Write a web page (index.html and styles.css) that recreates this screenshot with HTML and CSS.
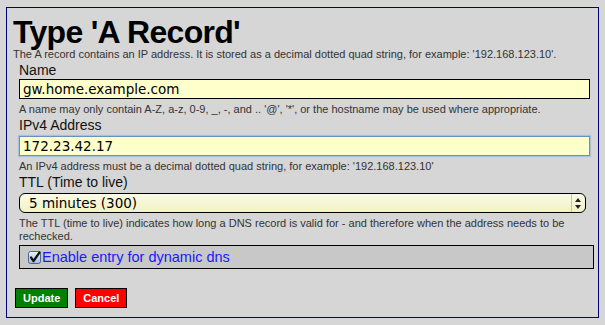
FILE: index.html
```html
<!DOCTYPE html>
<html lang="en">
<head>
    <meta charset="UTF-8">
    <title>Type 'A Record'</title>
    <link rel="stylesheet" href="styles.css">
</head>
<body>
    <div class="panel">
        <h1>Type 'A Record'</h1>
        <p class="intro">The A record contains an IP address. It is stored as a decimal dotted quad string, for example: '192.168.123.10'.</p>

        <form class="record-form">
            <label for="name">Name</label>
            <input type="text" id="name" class="field" value="gw.home.example.com">
            <p class="hint">A name may only contain A-Z, a-z, 0-9, _, -, and .. '@', '*', or the hostname may be used where appropriate.</p>

            <label for="address">IPv4 Address</label>
            <input type="text" id="address" class="field focused" value="172.23.42.17">
            <p class="hint">An IPv4 address must be a decimal dotted quad string, for example: '192.168.123.10'</p>

            <label for="ttl">TTL (Time to live)</label>
            <div class="select-wrap">
                <select id="ttl" class="field select">
                    <option value="300">5 minutes (300)</option>
                    <option value="3600">1 hour (3600)</option>
                    <option value="86400">1 day (86400)</option>
                </select>
                <span class="select-arrows">
                    <svg width="6" height="11" viewBox="0 0 6 11"><path d="M3 0 L6 4 L0 4 Z M0 7 L6 7 L3 11 Z" fill="#222"/></svg>
                </span>
            </div>
            <p class="hint">The TTL (time to live) indicates how long a DNS record is valid for - and therefore when the address needs to be rechecked.</p>

            <div class="dyn-box">
                <span class="check">
                    <svg width="13" height="13" viewBox="0 0 13 13">
                        <defs>
                            <linearGradient id="chk" x1="0" y1="0" x2="0" y2="1">
                                <stop offset="0" stop-color="#eef4fc"/>
                                <stop offset="1" stop-color="#9dbbe6"/>
                            </linearGradient>
                        </defs>
                        <rect x="0.5" y="0.5" width="12" height="12" rx="2" fill="url(#chk)" stroke="#4f6390"/>
                        <path d="M3 6.5 L5.5 10 L11.5 1.5" fill="none" stroke="#111" stroke-width="2.2" stroke-linecap="round" stroke-linejoin="round"/>
                    </svg>
                </span>
                <label for="dynamic" class="dyn-label">Enable entry for dynamic dns</label>
            </div>
        </form>

        <div class="actions">
            <button type="button" class="btn btn-update">Update</button>
            <button type="button" class="btn btn-cancel">Cancel</button>
        </div>
    </div>
</body>
</html>
```

FILE: styles.css
```css
body {
    margin: 0;
    padding-top: 7px;
    background-color: #d6d6d6;
    font-family: "Liberation Sans", Arial, sans-serif;
    color: #111;
}

.panel {
    margin: 0 6px;
    height: 309px;
    border: 1px solid #000080;
    padding: 0 6px;
}

h1 {
    margin: 9px 0 0;
    font-size: 32px;
    line-height: 31px;
    letter-spacing: -0.7px;
    font-weight: bold;
    color: #000;
}

.intro {
    margin: 0;
    font-size: 11px;
    line-height: 13px;
    color: #333;
}

.record-form {
    padding-left: 6px;
}

label {
    display: block;
    margin-top: 1px;
    font-size: 14px;
    line-height: 16px;
}

.field {
    display: block;
    box-sizing: border-box;
    width: 571px;
    height: 20px;
    margin: 1px 0 0;
    padding: 0 3px;
    border: 1px solid #000;
    background-color: #ffffcc;
    font-family: "DejaVu Sans", Verdana, sans-serif;
    font-size: 13.5px;
    color: #000;
}

.field.focused {
    margin-top: 3px;
    border-color: #6d8fc0;
    box-shadow: 0 0 1px 1px #a9c0de;
}

.select-wrap {
    position: relative;
    width: 567px;
    margin-top: 3px;
}

.select {
    width: 567px;
    margin: 0;
    padding: 0 9px;
    border-radius: 6px;
    appearance: none;
    -webkit-appearance: none;
    background: linear-gradient(#fbfbe4, #f2f2c6);
}

.select-arrows {
    position: absolute;
    right: 1px;
    top: 1px;
    width: 14px;
    height: 18px;
    box-sizing: border-box;
    padding-left: 3px;
    border-left: 1px solid #c4c4a8;
    display: flex;
    align-items: center;
}

.hint {
    margin: 4px 0 0;
    font-size: 11px;
    line-height: 13px;
    color: #333;
}

.dyn-box {
    display: flex;
    align-items: center;
    box-sizing: border-box;
    width: 575px;
    height: 24px;
    margin-top: 2px;
    border: 1px solid #000;
    background-color: #c8c8c8;
}

.check {
    display: flex;
    margin: 0 1px 0 8px;
}

.dyn-label {
    margin: 0;
    font-size: 14.5px;
    color: #1a1aff;
}

.actions {
    display: flex;
    gap: 7px;
    margin-top: 19px;
    margin-left: 2px;
}

.btn {
    height: 20px;
    padding: 0 7px;
    border: 1px solid #000;
    font-family: "Liberation Sans", Arial, sans-serif;
    font-size: 11px;
    font-weight: bold;
    line-height: 18px;
    color: #fff;
    cursor: pointer;
}

.btn-update {
    background-color: #008000;
}

.btn-cancel {
    background-color: #ff0000;
}
```
